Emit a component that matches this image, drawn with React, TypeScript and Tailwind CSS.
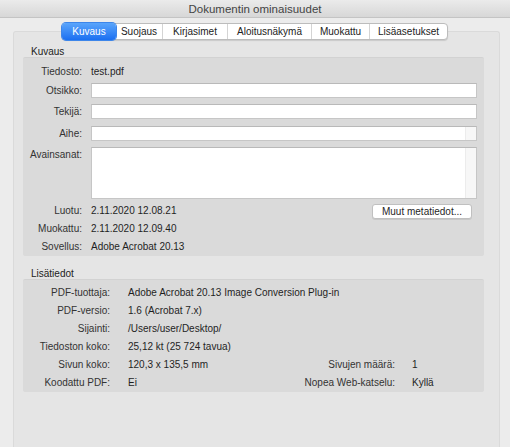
import React from 'react'

const tabs = [
  { label: 'Kuvaus', w: 'w-[54px]' },
  { label: 'Suojaus', w: 'w-[46px]' },
  { label: 'Kirjasimet', w: 'w-[65px]' },
  { label: 'Aloitusnäkymä', w: 'w-[84px]' },
  { label: 'Muokattu', w: 'w-[58px]' },
  { label: 'Lisäasetukset', w: 'w-[78px]' },
]

function Label({ children }: { children: React.ReactNode }) {
  return <div className="text-right text-[#333]">{children}</div>
}

function Field({ scroll, tall }: { scroll?: boolean; tall?: boolean }) {
  return (
    <div
      className={`flex bg-white border border-[#c6c6c6] border-t-[#b9b9b9] ${tall ? 'h-[52px]' : 'h-[15px]'}`}
    >
      <div className="flex-1" />
      {scroll && <div className="w-[11px] bg-[#f7f7f7] border-l border-[#ececec]" />}
    </div>
  )
}

export default function App() {
  return (
    <div
      className="w-[510px] h-[447px] overflow-hidden bg-[#ececec] text-[10px] leading-[12px] text-[#1f1f1f] flex flex-col"
      style={{ fontFamily: '"Liberation Sans", Arial, sans-serif' }}
    >
      {/* title bar */}
      <div className="h-[18px] shrink-0 flex items-center justify-center bg-gradient-to-b from-[#ebebeb] to-[#d7d7d7] border-b border-[#c4c4c4] text-[11.5px] text-[#444]">
        Dokumentin ominaisuudet
      </div>

      <div className="flex-1 flex flex-col pt-[5px] pl-[13px] pr-[10px]">
        {/* tabs */}
        <div className="relative z-10 flex justify-center -mb-[9px]">
          <div className="flex h-[17px] rounded-[4px] border border-[#bcbcbc] bg-white shadow-[0_1px_1px_rgba(0,0,0,0.12)] ml-[-3px]">
            {tabs.map((t, i) => (
              <div
                key={t.label}
                className={`${t.w} flex items-center justify-center ${
                  i === 0
                    ? 'bg-gradient-to-b from-[#5aa5fb] to-[#1a6ff1] text-white rounded-[4px] -my-[1px] -ml-[1px] shadow-[0_0_0_1px_#3d86ea]'
                    : 'text-[#222]'
                } ${i > 1 ? 'border-l border-[#d4d4d4]' : ''}`}
              >
                {t.label}
              </div>
            ))}
          </div>
        </div>

        {/* panel */}
        <div className="flex-1 bg-[#e5e5e5] border border-[#dadada] border-b-0 rounded-t-[3px] pl-[9px] pr-[15px]">
          <div className="mt-[15px] h-[10px] leading-[10px] pl-[8px] text-[#222]">Kuvaus</div>

          <div className="bg-[#dadada] border-t border-[#d2d2d2] rounded-[2px] pt-[5px] pr-[7px]">
            <div className="grid grid-cols-[59px_1fr] gap-x-[9px] items-center">
              <div className="h-[18px] flex items-center justify-end text-[#333]">Tiedosto:</div>
              <div className="h-[18px] flex items-center">test.pdf</div>

              <div className="mt-[2px]"><Label>Otsikko:</Label></div>
              <div className="mt-[2px]"><Field /></div>

              <div className="mt-[6px]"><Label>Tekijä:</Label></div>
              <div className="mt-[6px]"><Field /></div>

              <div className="mt-[7px]"><Label>Aihe:</Label></div>
              <div className="mt-[7px]"><Field scroll /></div>

              <div className="mt-[6px] self-start pt-[2px]"><Label>Avainsanat:</Label></div>
              <div className="mt-[6px]"><Field scroll tall /></div>

              <div className="mt-[3px] h-[18px] flex items-center justify-end text-[#333]">Luotu:</div>
              <div className="mt-[3px] h-[18px] flex items-center justify-between">
                <span>2.11.2020 12.08.21</span>
                <button className="mr-[5px] mt-[1px] w-[100px] h-[15px] bg-white border border-[#c0c0c0] rounded-[3px] shadow-[0_1px_0_rgba(0,0,0,0.08)] text-[10px] leading-[12px] text-[#1f1f1f]">
                  Muut metatiedot...
                </button>
              </div>

              <div className="h-[18px] flex items-center justify-end text-[#333]">Muokattu:</div>
              <div className="h-[18px] flex items-center">2.11.2020 12.09.40</div>

              <div className="h-[18px] flex items-center justify-end text-[#333]">Sovellus:</div>
              <div className="h-[18px] flex items-center">Adobe Acrobat 20.13</div>
            </div>
          </div>

          <div className="mt-[13px] h-[10px] leading-[10px] pl-[8px] text-[#222]">Lisätiedot</div>

          <div className="bg-[#dadada] border-t border-[#d2d2d2] rounded-[2px] pt-[4px]">
            {[
              ['PDF-tuottaja:', 'Adobe Acrobat 20.13 Image Conversion Plug-in'],
              ['PDF-versio:', '1.6 (Acrobat 7.x)'],
              ['Sijainti:', '/Users/user/Desktop/'],
              ['Tiedoston koko:', '25,12 kt (25 724 tavua)'],
            ].map(([k, v]) => (
              <div key={k} className="h-[18px] flex items-center">
                <div className="w-[87px] text-right text-[#333]">{k}</div>
                <div className="ml-[18px] whitespace-nowrap">{v}</div>
              </div>
            ))}
            {[
              ['Sivun koko:', '120,3 x 135,5 mm', 'Sivujen määrä:', '1'],
              ['Koodattu PDF:', 'Ei', 'Nopea Web-katselu:', 'Kyllä'],
            ].map(([k, v, k2, v2]) => (
              <div key={k} className="h-[18px] flex items-center">
                <div className="w-[87px] text-right text-[#333]">{k}</div>
                <div className="ml-[18px] w-[140px]">{v}</div>
                <div className="w-[127px] text-right text-[#333]">{k2}</div>
                <div className="ml-[17px]">{v2}</div>
              </div>
            ))}
          </div>
        </div>
      </div>
    </div>
  )
}
